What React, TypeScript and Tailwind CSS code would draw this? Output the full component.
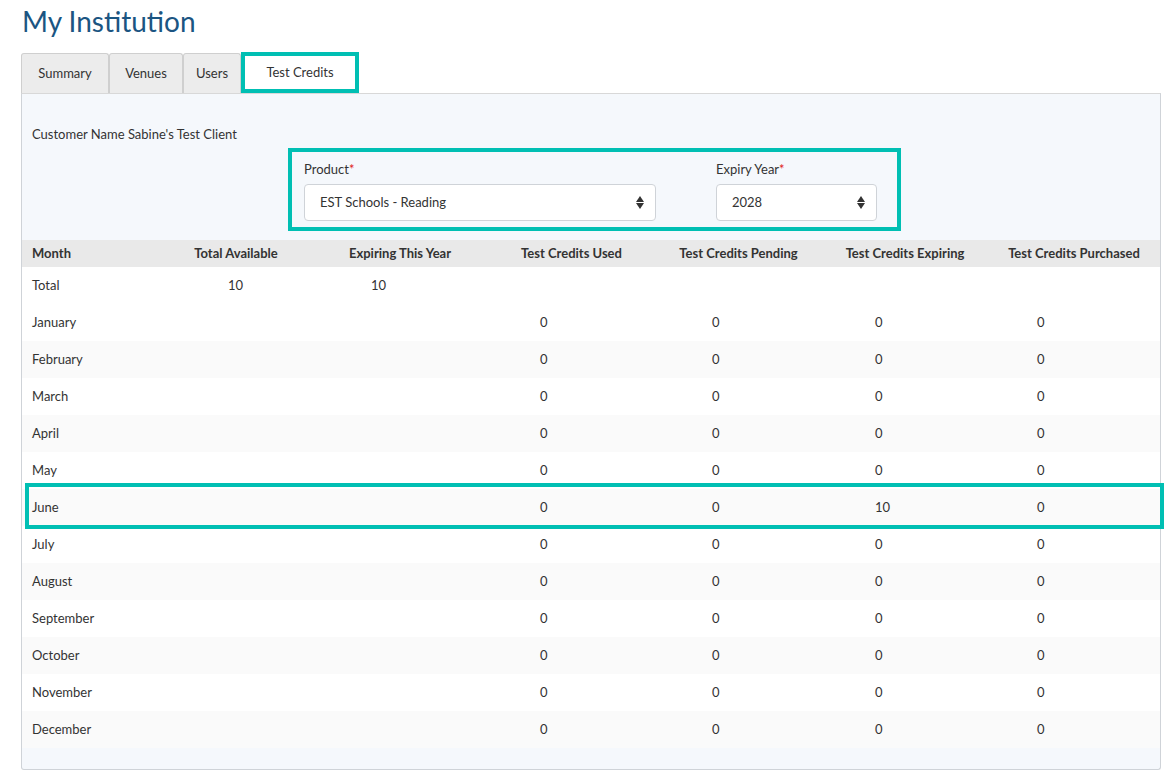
import * as React from 'react'

const months = ['January', 'February', 'March', 'April', 'May', 'June', 'July', 'August', 'September', 'October', 'November', 'December']
const cols = 'grid grid-cols-[138px_152px_176px_167px_167px_166px_172px]'

function Select({ value, className }: { value: string; className: string }) {
  return <div className={`h-[37px] bg-white border border-[#cfd3d8] rounded-[4px] flex items-center justify-between pl-[15px] pr-[10px] ${className}`}>
    <span>{value}</span>
    <svg width="10" height="18" viewBox="0 0 10 18">
      <path d="M5 2 L9 8 H1 Z" fill="#333" />
      <path d="M5 15 L9 9 H1 Z" fill="#333" />
    </svg>
  </div>
}

function Row({ label, values, shade, hl }: { label: string; values: string[]; shade: boolean; hl?: boolean }) {
  const pads = ['pl-[68px]', 'pl-[59px]', 'pl-[52px]', 'pl-[57px]', 'pl-[53px]', 'pl-[49px]']
  return <div className={`relative ${cols} h-[37px] items-center ${shade ? 'bg-[#fafafa]' : 'bg-white'}`}>
    <div className="pl-[10px]">{label}</div>
    {values.map((v, i) => <div key={i} className={pads[i]}>{v}</div>)}
    {hl && <div className="absolute z-10 left-[3px] right-[-4px] top-[-6px] bottom-[-3px] border-[4px] border-[#00bfb3]"></div>}
  </div>
}

export default function App() {
  return <div className="w-[1174px] h-[784px] bg-white text-[13px] text-[#333] overflow-hidden" style={{ fontFamily: 'Lato, "Open Sans", sans-serif' }}>
    <div className="pl-[22px] pt-0 h-[53px] text-[28px] text-[#1b5582]">My Institution</div>
    <div className="pl-[21px] flex h-[40px] items-end">
      <div className="w-[88px] h-[40px] bg-[#ececec] border border-[#cfcfcf] border-b-0 rounded-t-[3px] flex items-center justify-center">Summary</div>
      <div className="w-[74px] h-[40px] bg-[#ececec] border border-[#cfcfcf] border-b-0 rounded-t-[3px] flex items-center justify-center">Venues</div>
      <div className="w-[58px] h-[40px] bg-[#ececec] border border-[#cfcfcf] border-b-0 rounded-t-[3px] flex items-center justify-center">Users</div>
      <div className="w-[118px] h-[41px] bg-white border-[4px] border-[#00bfb3] flex items-center justify-center">Test Credits</div>
    </div>
    <div className="ml-[21px] w-[1140px] h-[677px] bg-[#f5f8fc] border border-[#cfd3d8] border-t-[#d8d8d8] rounded-b-[3px]">
      <div className="pl-[10px] pt-[31px] h-[54px]">Customer Name Sabine's Test Client</div>
      <div className="ml-[266px] w-[613px] h-[83px] border-[4px] border-[#00bfb3] flex pl-[12px] pt-[8px]">
        <div>
          <div className="h-[24px]">Product<span className="text-[#e02020]">*</span></div>
          <Select value="EST Schools - Reading" className="w-[352px]" />
        </div>
        <div className="ml-[60px]">
          <div className="h-[24px]">Expiry Year<span className="text-[#e02020]">*</span></div>
          <Select value="2028" className="w-[161px]" />
        </div>
      </div>
      <div className="mt-[9px] bg-white">
        <div className={`${cols} h-[27px] items-center bg-[#e9e9e9] font-bold`}>
          <div className="pl-[10px]">Month</div>
          <div className="text-center">Total Available</div>
          <div className="text-center">Expiring This Year</div>
          <div className="text-center">Test Credits Used</div>
          <div className="text-center">Test Credits Pending</div>
          <div className="text-center">Test Credits Expiring</div>
          <div className="text-center">Test Credits Purchased</div>
        </div>
        <Row label="Total" values={['10', '10', '', '', '', '']} shade={false} />
        {months.map((m, i) => <Row key={m} label={m} values={['', '', '0', '0', m === 'June' ? '10' : '0', '0']} shade={i % 2 === 1} hl={m === 'June'} />)}
      </div>
    </div>
  </div>
}
